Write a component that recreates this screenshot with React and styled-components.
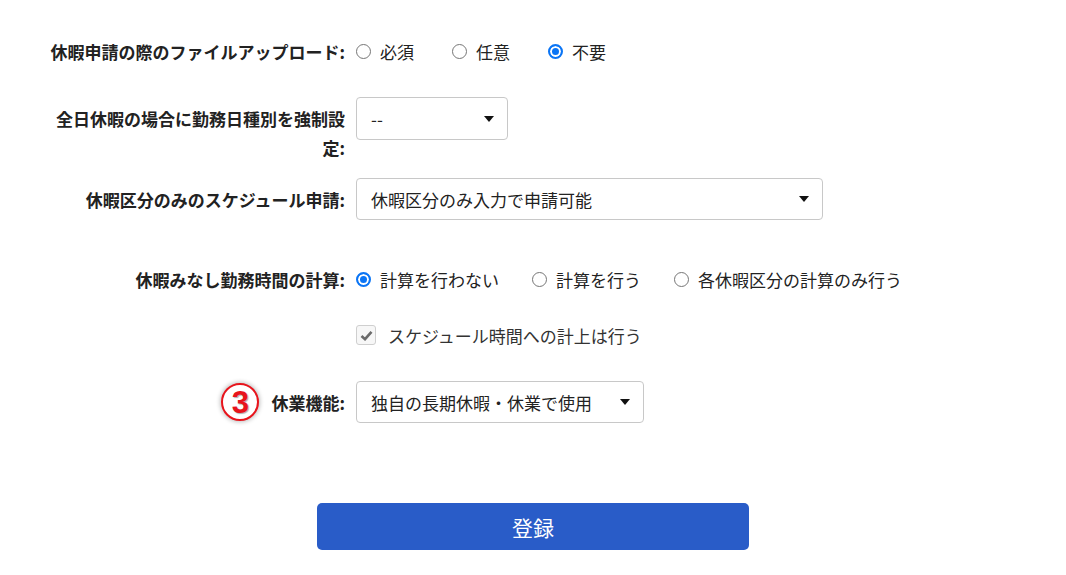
import React from 'react';
import styled, { createGlobalStyle } from 'styled-components';

const GlobalStyle = createGlobalStyle`
  html, body {
    margin: 0;
    padding: 0;
    background: #fff;
  }
  body {
    font-family: "Noto Sans CJK JP", "Noto Sans", sans-serif;
    color: #222;
    font-size: 17px;
  }
`;

const StyledPage = styled.div`
  width: 1066px;
  padding-top: 36px;
`;

const StyledRow = styled.div`
  display: grid;
  grid-template-columns: 305px 1fr;
  column-gap: 11px;
  align-items: ${({ alignTop }) => (alignTop ? 'start' : 'center')};
  padding-left: 40px;
  margin-top: ${({ gap }) => gap || 0}px;
  min-height: ${({ minH }) => minH || 30}px;
`;

const StyledLabel = styled.div`
  text-align: right;
  font-weight: 700;
  font-size: 17px;
  line-height: 29px;
  padding-top: ${({ pt }) => pt || 0}px;
  display: flex;
  justify-content: flex-end;
  align-items: center;
`;

const StyledLabelText = styled.span`
  display: block;
`;

const StyledBadge = styled.span`
  box-sizing: border-box;
  width: 38px;
  height: 38px;
  border-radius: 50%;
  border: 2px solid #e8141c;
  background: #fff;
  box-shadow: 0 0 4px 1px rgba(0, 0, 0, 0.25);
  color: #e8141c;
  font-family: "Liberation Sans", Arial, sans-serif;
  font-weight: 700;
  font-size: 31px;
  line-height: 1;
  display: inline-flex;
  align-items: center;
  justify-content: center;
  margin-right: 12px;
  text-shadow: 1px 1px 1px rgba(120, 120, 120, 0.6);
  flex-shrink: 0;
`;

const StyledRadioGroup = styled.div`
  display: flex;
  align-items: center;
  height: 30px;
`;

const StyledOption = styled.label`
  display: inline-flex;
  align-items: center;
  gap: 9px;
  margin-right: ${({ spacing }) => spacing || 38}px;
  font-size: 17px;
  white-space: nowrap;
`;

const StyledRadio = styled.input`
  appearance: none;
  -webkit-appearance: none;
  box-sizing: border-box;
  flex-shrink: 0;
  margin: 0;
  width: 15px;
  height: 15px;
  min-width: 15px;
  border-radius: 50%;
  border: 1.5px solid #767676;
  background: #fff;

  &:checked {
    border: 2px solid #0b75f5;
    background: #0b75f5;
    box-shadow: inset 0 0 0 2px #fff;
  }
`;

const StyledCheckRow = styled.label`
  display: inline-flex;
  align-items: center;
  gap: 12px;
  height: 30px;
  font-size: 17px;
  color: #333;
`;

const StyledCheckBox = styled.span`
  width: 18px;
  height: 18px;
  border: 1px solid #cfcfcf;
  border-radius: 3px;
  background: #f7f7f7;
  display: inline-flex;
  align-items: center;
  justify-content: center;
`;

const StyledSelect = styled.div`
  box-sizing: border-box;
  width: ${({ w }) => w}px;
  height: ${({ h }) => h}px;
  border: 1px solid #c8c8c8;
  border-radius: 4px;
  background: #fff;
  display: flex;
  align-items: center;
  justify-content: space-between;
  padding: 0 13px 0 14px;
  font-size: 17px;
  color: #222;
`;

const StyledButtonRow = styled.div`
  display: flex;
  justify-content: center;
  margin-top: 80px;
`;

const StyledButton = styled.button`
  width: 432px;
  height: 47px;
  border: none;
  border-radius: 5px;
  background: #295cc8;
  color: #fff;
  font-family: "Noto Sans CJK JP", sans-serif;
  font-size: 21px;
  cursor: pointer;
`;

const Caret = () => (
  <svg width="10" height="6" viewBox="0 0 10 6">
    <polygon points="0,0 10,0 5,6" fill="#111" />
  </svg>
);

const Select = ({ value, w, h }) => (
  <StyledSelect w={w} h={h}>
    <span>{value}</span>
    <Caret />
  </StyledSelect>
);

const RadioGroup = ({ name, options, checked, spacing }) => (
  <StyledRadioGroup>
    {options.map((opt) => (
      <StyledOption key={opt} spacing={spacing}>
        <StyledRadio type="radio" name={name} defaultChecked={opt === checked} />
        {opt}
      </StyledOption>
    ))}
  </StyledRadioGroup>
);

const App = () => (
  <>
    <GlobalStyle />
    <StyledPage>
      <StyledRow>
        <StyledLabel>休暇申請の際のファイルアップロード:</StyledLabel>
        <RadioGroup name="upload" options={['必須', '任意', '不要']} checked="不要" spacing={38} />
      </StyledRow>

      <StyledRow gap={31} alignTop>
        <StyledLabel pt={7}>
          <StyledLabelText>全日休暇の場合に勤務日種別を強制設定:</StyledLabelText>
        </StyledLabel>
        <Select value="--" w={152} h={43} />
      </StyledRow>

      <StyledRow gap={16}>
        <StyledLabel>休暇区分のみのスケジュール申請:</StyledLabel>
        <Select value="休暇区分のみ入力で申請可能" w={467} h={42} />
      </StyledRow>

      <StyledRow gap={44}>
        <StyledLabel>休暇みなし勤務時間の計算:</StyledLabel>
        <RadioGroup
          name="calc"
          options={['計算を行わない', '計算を行う', '各休暇区分の計算のみ行う']}
          checked="計算を行わない"
          spacing={33}
        />
      </StyledRow>

      <StyledRow gap={26}>
        <StyledLabel />
        <StyledCheckRow>
          <StyledCheckBox>
            <svg width="13" height="11" viewBox="0 0 13 11">
              <path d="M1.5 6 L5 9.2 L11.5 1.8" stroke="#6b6b6b" strokeWidth="2.6" fill="none" />
            </svg>
          </StyledCheckBox>
          スケジュール時間への計上は行う
        </StyledCheckRow>
      </StyledRow>

      <StyledRow gap={31} minH={42}>
        <StyledLabel>
          <StyledBadge>3</StyledBadge>
          休業機能:
        </StyledLabel>
        <Select value="独自の長期休暇・休業で使用" w={288} h={42} />
      </StyledRow>

      <StyledButtonRow>
        <StyledButton type="button">登録</StyledButton>
      </StyledButtonRow>
    </StyledPage>
  </>
);

export default App;
